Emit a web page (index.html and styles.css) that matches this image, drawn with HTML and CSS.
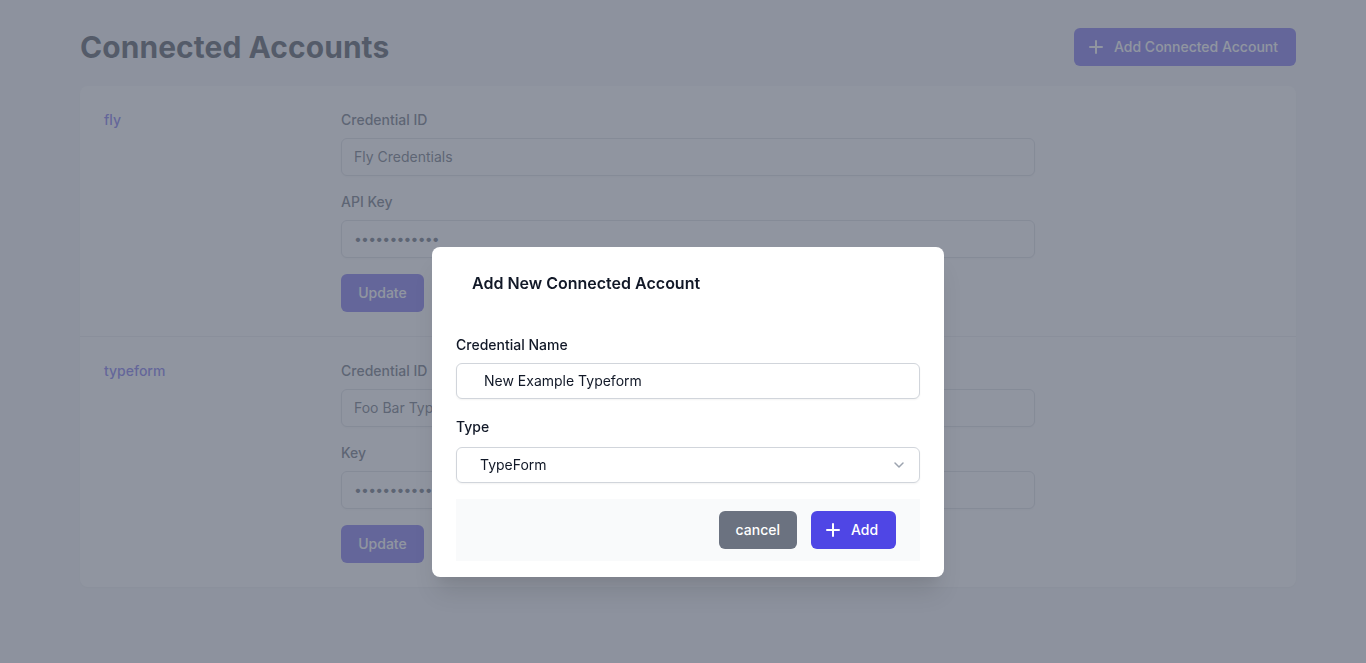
FILE: index.html
```html
<!DOCTYPE html>
<html lang="en">
<head>
<meta charset="utf-8">
<title>Connected Accounts</title>
<link rel="stylesheet" href="styles.css">
</head>
<body>
<div class="page">
  <header class="header">
    <h1 class="title">Connected Accounts</h1>
    <button class="btn btn-primary btn-add-top">
      <svg class="icon" viewBox="0 0 20 20" fill="currentColor"><path d="M10 3a1 1 0 011 1v5h5a1 1 0 110 2h-5v5a1 1 0 11-2 0v-5H4a1 1 0 110-2h5V4a1 1 0 011-1z"/></svg>
      Add Connected Account
    </button>
  </header>

  <section class="card">
    <div class="row">
      <div class="row-name">fly</div>
      <div class="row-form">
        <label class="label">Credential ID</label>
        <input class="input" type="text" value="Fly Credentials">
        <label class="label label-next">API Key</label>
        <input class="input input-pw" type="password" value="abcdefghijkl">
        <button class="btn btn-primary btn-update">Update</button>
      </div>
    </div>
    <div class="row row-border">
      <div class="row-name">typeform</div>
      <div class="row-form">
        <label class="label">Credential ID</label>
        <input class="input" type="text" value="Foo Bar Typeform">
        <label class="label label-next">Key</label>
        <input class="input input-pw" type="password" value="abcdefghijkl">
        <button class="btn btn-primary btn-update">Update</button>
      </div>
    </div>
  </section>
</div>

<div class="overlay"></div>

<div class="modal">
  <h2 class="modal-title">Add New Connected Account</h2>
  <div class="modal-form">
    <label class="m-label">Credential Name</label>
    <input class="m-input" type="text" value="New Example Typeform">
    <label class="m-label m-label-type">Type</label>
    <div class="m-select">
      <span>TypeForm</span>
      <svg class="chev" viewBox="0 0 20 20" fill="none"><path d="M6 8l4 4 4-4" stroke="#9ca3af" stroke-width="1.5" stroke-linecap="round" stroke-linejoin="round"/></svg>
    </div>
    <div class="m-footer">
      <button class="btn btn-gray">cancel</button>
      <button class="btn btn-primary btn-modal-add">
        <svg class="icon" viewBox="0 0 20 20" fill="currentColor"><path d="M10 3a1 1 0 011 1v5h5a1 1 0 110 2h-5v5a1 1 0 11-2 0v-5H4a1 1 0 110-2h5V4a1 1 0 011-1z"/></svg>
        Add
      </button>
    </div>
  </div>
</div>
</body>
</html>
```

FILE: styles.css
```css
* { box-sizing: border-box; }

html, body {
  margin: 0;
  padding: 0;
}

body {
  background: #f3f4f6;
  font-family: Inter, "Noto Sans", "Liberation Sans", sans-serif;
  color: #111827;
  height: 663px;
  overflow: hidden;
}

.page {
  padding: 28px 70px 0 80px;
}

.header {
  display: flex;
  align-items: center;
  justify-content: space-between;
  height: 38px;
}

.title {
  margin: 0;
  font-size: 30px;
  line-height: 36px;
  font-weight: 700;
  color: #111827;
  letter-spacing: 0.05px;
}

.btn {
  display: inline-flex;
  align-items: center;
  height: 38px;
  padding: 0 16px;
  border: 0;
  border-radius: 6px;
  font-family: inherit;
  font-size: 14px;
  font-weight: 500;
  line-height: 20px;
  color: #ffffff;
  cursor: pointer;
}

.btn-primary { background: #4f46e5; }
.btn-gray { background: #6b7280; padding: 0 17px; }

.icon {
  width: 20px;
  height: 20px;
  margin-left: -4px;
  margin-right: 8px;
}

.btn-add-top { width: 222px; }

.card {
  margin-top: 20px;
  background: #ffffff;
  border-radius: 8px;
  box-shadow: 0 1px 2px rgba(0,0,0,0.05);
}

.row {
  display: flex;
  padding: 24px;
}

.row-border { border-top: 1px solid #e5e7eb; }

.row-name {
  width: 237px;
  font-size: 14px;
  line-height: 20px;
  font-weight: 500;
  color: #4f46e5;
}

.row-form {
  display: flex;
  flex-direction: column;
  align-items: flex-start;
  width: 694px;
}

.label {
  display: block;
  font-size: 14px;
  line-height: 20px;
  font-weight: 500;
  color: #374151;
}

.label-next { margin-top: 16px; }

.input {
  margin-top: 8px;
  width: 694px;
  height: 38px;
  padding: 0 12px 1px;
  border: 1px solid #d1d5db;
  border-radius: 6px;
  font-family: inherit;
  font-size: 14px;
  color: #374151;
  background: #ffffff;
  box-shadow: 0 1px 2px rgba(0,0,0,0.05);
}

.input-pw { letter-spacing: -0.8px; }

.btn-update {
  margin-top: 16px;
  width: 83px;
  justify-content: center;
}

.overlay {
  position: fixed;
  inset: 0;
  background: rgba(107, 114, 128, 0.75);
}

.modal {
  position: absolute;
  left: 432px;
  top: 247px;
  width: 512px;
  background: #ffffff;
  border-radius: 8px;
  padding: 24px 24px 16px;
  box-shadow: 0 20px 25px -5px rgba(0,0,0,0.1), 0 10px 10px -5px rgba(0,0,0,0.04);
}

.modal-title {
  margin: 0;
  padding-left: 16px;
  font-size: 16px;
  line-height: 24px;
  font-weight: 600;
  color: #111827;
}

.modal-form {
  display: flex;
  flex-direction: column;
  margin-top: 40px;
}

.m-label {
  display: block;
  font-size: 14px;
  line-height: 20px;
  font-weight: 500;
  color: #111827;
}

.m-label-type { margin-top: 18px; }

.m-input {
  margin-top: 8px;
  width: 464px;
  height: 36px;
  padding: 0 0 1px 27px;
  border: 1px solid #d1d5db;
  border-radius: 6px;
  font-family: inherit;
  font-size: 14px;
  color: #111827;
  background: #ffffff;
  box-shadow: 0 1px 2px rgba(0,0,0,0.05);
}

.m-select {
  margin-top: 10px;
  width: 464px;
  height: 36px;
  display: flex;
  align-items: center;
  justify-content: space-between;
  padding: 0 10px 1px 23px;
  border: 1px solid #d1d5db;
  border-radius: 6px;
  font-size: 14px;
  color: #111827;
  box-shadow: 0 1px 2px rgba(0,0,0,0.05);
}

.chev {
  width: 20px;
  height: 20px;
}

.m-footer {
  margin-top: 16px;
  display: flex;
  justify-content: flex-end;
  gap: 14px;
  padding: 12px 24px;
  background: #f9fafb;
}

.btn-modal-add { width: 85px; }
```
